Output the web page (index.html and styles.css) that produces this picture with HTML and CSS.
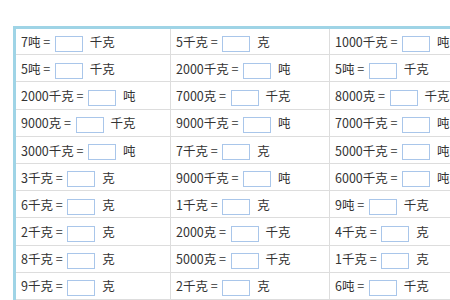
FILE: index.html
```html
<!DOCTYPE html>
<html>
  <head>
    <meta charset="utf-8">
    <title>质量单位换算</title>
    <link rel="stylesheet" href="styles.css">
  </head>
  <body>
    <table class="drill">
      <tr>
        <td>7吨 = <input class="ans"> 千克</td>
        <td>5千克 = <input class="ans"> 克</td>
        <td>1000千克 = <input class="ans"> 吨</td>
      </tr>
      <tr>
        <td>5吨 = <input class="ans"> 千克</td>
        <td>2000千克 = <input class="ans"> 吨</td>
        <td>5吨 = <input class="ans"> 千克</td>
      </tr>
      <tr>
        <td>2000千克 = <input class="ans"> 吨</td>
        <td>7000克 = <input class="ans"> 千克</td>
        <td>8000克 = <input class="ans"> 千克</td>
      </tr>
      <tr>
        <td>9000克 = <input class="ans"> 千克</td>
        <td>9000千克 = <input class="ans"> 吨</td>
        <td>7000千克 = <input class="ans"> 吨</td>
      </tr>
      <tr>
        <td>3000千克 = <input class="ans"> 吨</td>
        <td>7千克 = <input class="ans"> 克</td>
        <td>5000千克 = <input class="ans"> 吨</td>
      </tr>
      <tr>
        <td>3千克 = <input class="ans"> 克</td>
        <td>9000千克 = <input class="ans"> 吨</td>
        <td>6000千克 = <input class="ans"> 吨</td>
      </tr>
      <tr>
        <td>6千克 = <input class="ans"> 克</td>
        <td>1千克 = <input class="ans"> 克</td>
        <td>9吨 = <input class="ans"> 千克</td>
      </tr>
      <tr>
        <td>2千克 = <input class="ans"> 克</td>
        <td>2000克 = <input class="ans"> 千克</td>
        <td>4千克 = <input class="ans"> 克</td>
      </tr>
      <tr>
        <td>8千克 = <input class="ans"> 克</td>
        <td>5000克 = <input class="ans"> 千克</td>
        <td>1千克 = <input class="ans"> 克</td>
      </tr>
      <tr>
        <td>9千克 = <input class="ans"> 克</td>
        <td>2千克 = <input class="ans"> 克</td>
        <td>6吨 = <input class="ans"> 千克</td>
      </tr>
    </table>
  </body>
</html>
```

FILE: styles.css
```css
*,
*:before,
*:after {
  box-sizing: border-box;
}

html,
body {
  margin: 0;
  padding: 0;
  background: #fff;
  overflow: hidden;
}

body {
  padding: 26px 0 0 13px;
  font-family: "Microsoft YaHei", "Noto Sans CJK SC", sans-serif;
  font-size: 12.5px;
  color: #333;
}

.drill {
  border-collapse: collapse;
  border-top: 3px solid #9fd4e6;
  border-left: 3px solid #9fd4e6;
  width: 480px;
  table-layout: fixed;
}

.drill td {
  height: 27.2px;
  padding: 1px 5px 0 5px;
  border-right: 1px solid #ddd;
  border-bottom: 1px solid #ddd;
  white-space: nowrap;
  vertical-align: middle;
}

.drill td:nth-child(1) {
  width: 156px;
}

.drill td:nth-child(2) {
  width: 159px;
}

.ans {
  width: 28px;
  height: 16px;
  margin: 0 4px 0 2px;
  padding: 0;
  border: 1px solid #a9c6ea;
  vertical-align: middle;
  background: #fff;
}
```
